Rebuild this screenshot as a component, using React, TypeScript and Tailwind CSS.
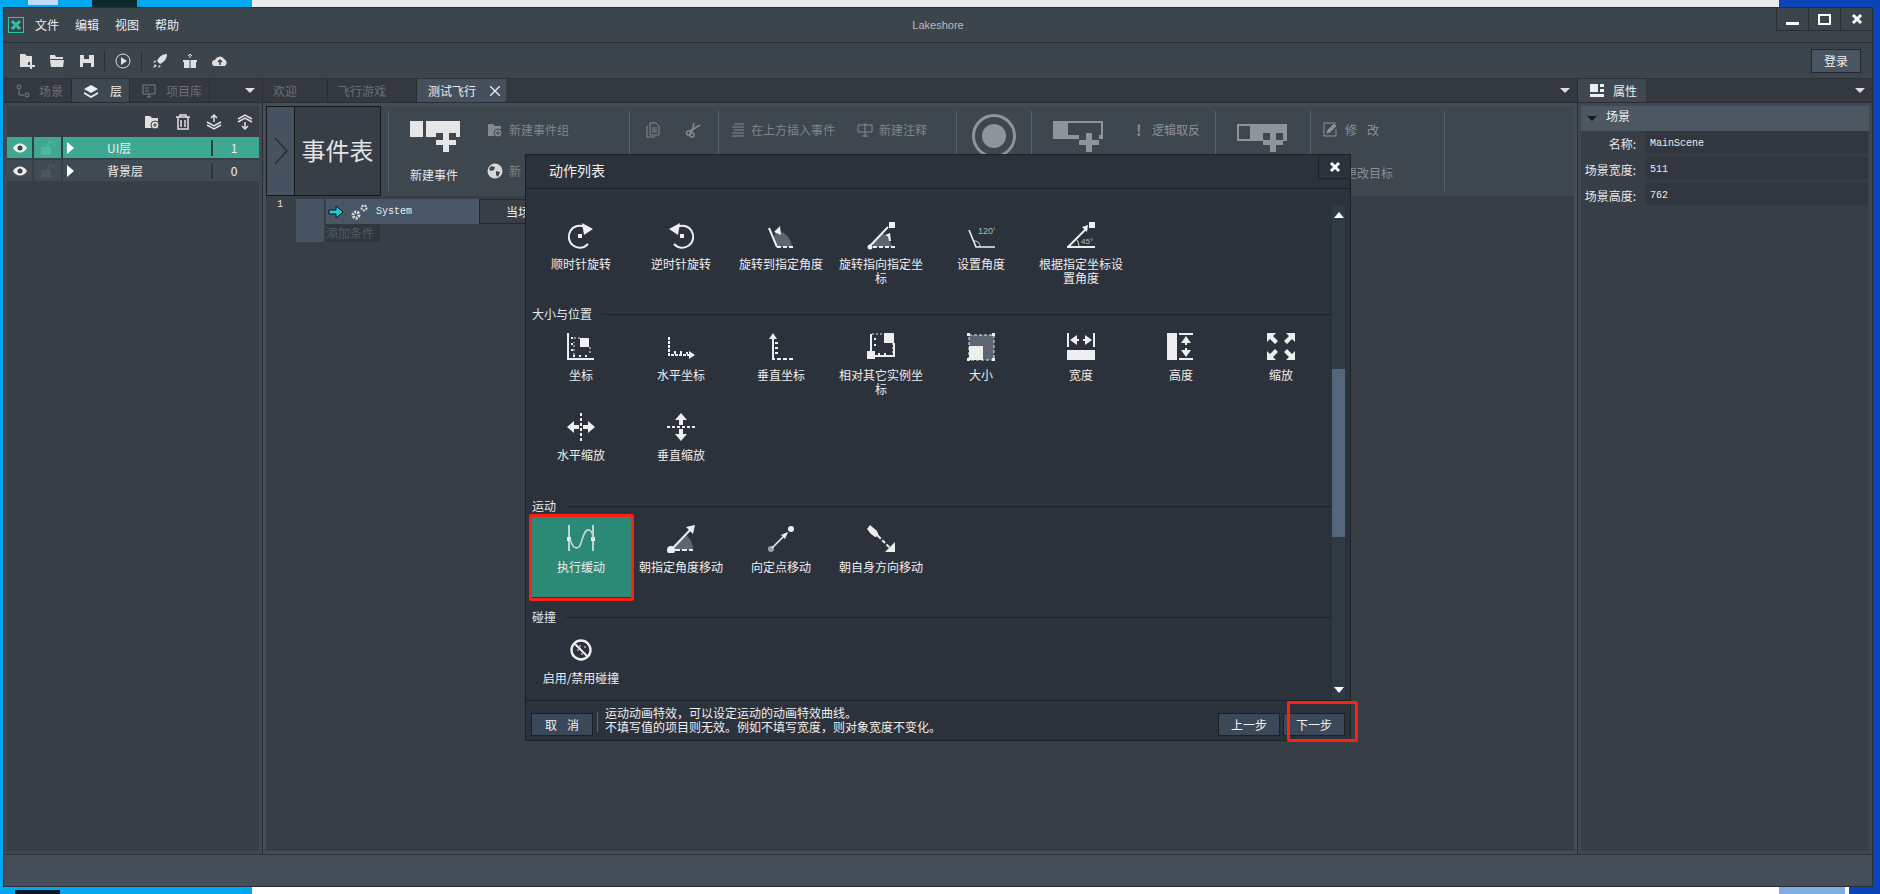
import type { ReactNode } from "react";

const F = "#eeeeee";
const G = "#5c6670";

function Svg({ children, w = 28, h = 28 }: { children: ReactNode; w?: number; h?: number }) {
  return (
    <svg width={w} height={h} viewBox={`0 0 ${w} ${h}`} fill="none" className="shrink-0">
      {children}
    </svg>
  );
}

/* ---------- action icons ---------- */
const Clockwise = () => (
  <Svg>
    <path d="M18 5A11 11 0 1 0 21 22" stroke={F} strokeWidth="2" />
    <path d="M15 1l11 6-9 6z" fill={F} />
    <rect x="11" y="12" width="4" height="4" fill={F} />
  </Svg>
);
const CounterClockwise = () => (
  <Svg>
    <g transform="translate(28 0) scale(-1 1)">
      <path d="M18 5A11 11 0 1 0 21 22" stroke={F} strokeWidth="2" />
      <path d="M15 1l11 6-9 6z" fill={F} />
    </g>
    <rect x="13" y="12" width="4" height="4" fill={F} />
  </Svg>
);
const RotateToAngle = () => (
  <Svg>
    <path d="M7 14L10 9c8 0 14 7 15 16H11z" fill={G} />
    <path d="M2 6l8 19" stroke={F} strokeWidth="2" />
    <path d="M7 10l6-6 1 9z" fill={F} />
    <path d="M10 25h16" stroke={F} strokeWidth="2" strokeDasharray="4 2" />
  </Svg>
);
const RotateToPoint = () => (
  <Svg>
    <path d="M6 21L15 11c5 3 9 8 10 14H6z" fill={G} />
    <rect x="22" y="0" width="6" height="6" fill={F} />
    <path d="M2 25L21 5" stroke={F} strokeWidth="2" />
    <circle cx="3" cy="25" r="2.5" fill={F} />
    <path d="M6 25h22" stroke={F} strokeWidth="2" strokeDasharray="4 2" />
    <path d="M18 13l5-2 1 8-2 0-1-4z" fill={F} />
  </Svg>
);
const SetAngle = () => (
  <Svg>
    <path d="M2 8l7 17h20" stroke={F} strokeWidth="1.6" />
    <path d="M7 19c4 0 6 2 6 6" stroke={F} strokeWidth="1" />
    <text x="11" y="12" fontSize="9" fill="#b5b9bd" fontFamily="Liberation Sans, sans-serif">120°</text>
  </Svg>
);
const AngleFromPoint = () => (
  <Svg>
    <rect x="22" y="0" width="6" height="6" fill={F} />
    <path d="M1 25L20 6" stroke={F} strokeWidth="2" />
    <path d="M15 5l6-2-1 7z" fill={F} />
    <path d="M0 25h28" stroke={F} strokeWidth="2" />
    <path d="M9 17c2 2 3 5 3 8" stroke={F} strokeWidth="1" />
    <text x="14" y="22" fontSize="8" fill="#b5b9bd" fontFamily="Liberation Sans, sans-serif">45°</text>
  </Svg>
);
const Ticks = ({ d }: { d: string }) => <path d={d} stroke={F} strokeWidth="2" />;
const Position = () => (
  <Svg>
    <rect x="13" y="5" width="9" height="9" fill={F} />
    <path d="M1 0v26h26" stroke={F} strokeWidth="2" />
    <Ticks d="M4 5h2M4 11h2M4 17h2M7 24v-2M13 24v-2M19 24v-2" />
    <path d="M7 5h6M23 14v8M7 22V9" stroke={F} strokeWidth="1" strokeDasharray="2 2" />
  </Svg>
);
const PositionX = () => (
  <Svg>
    <path d="M2 4v18h20" stroke={F} strokeWidth="2" strokeDasharray="3 1" />
    <path d="M22 18l6 4-6 4z" fill={F} />
    <Ticks d="M8 21v-3M14 21v-3M20 21v-2" />
  </Svg>
);
const PositionY = () => (
  <Svg>
    <path d="M6 6v20h20" stroke={F} strokeWidth="2" strokeDasharray="4 2" />
    <path d="M2 6l4-6 4 6z" fill={F} />
    <Ticks d="M8 10h3M8 15h3M8 20h3" />
    <path d="M6 5v21" stroke={F} strokeWidth="2" />
  </Svg>
);
const PositionRel = () => (
  <Svg>
    <rect x="17" y="0" width="10" height="10" fill={F} />
    <rect x="0" y="18" width="8" height="8" fill={F} />
    <path d="M4 1v20M8 23h19V10" stroke={F} strokeWidth="2" />
    <path d="M5 1h12M26 10v12" stroke={F} strokeWidth="1" strokeDasharray="2 2" />
    <Ticks d="M7 6h2M7 12h2M12 22v-2M18 22v-2" />
  </Svg>
);
const Size = () => (
  <Svg>
    <rect x="2" y="2" width="25" height="25" fill={G} />
    <rect x="2" y="13" width="14" height="14" fill={F} />
    <rect x="2" y="2" width="25" height="25" stroke={F} strokeWidth="1" strokeDasharray="3 2" />
    <path d="M0 0h3v3H0zM25 0h3v3h-3zM0 25h3v3H0zM25 25h3v3h-3z" fill={F} />
  </Svg>
);
const WidthIcon = () => (
  <Svg>
    <path d="M1 0v14M27 0v14" stroke={F} strokeWidth="2" />
    <path d="M3 7l7-5v4h2v2h-2v4zM25 7l-7-5v4h-2v2h2v4z" fill={F} />
    <rect x="0" y="17" width="28" height="10" fill={F} />
  </Svg>
);
const HeightIcon = () => (
  <Svg>
    <rect x="0" y="0" width="10" height="27" fill={F} />
    <path d="M12 1h14M12 26h14" stroke={F} strokeWidth="2" />
    <path d="M19 3l5 7h-4v2h-2v-2h-4zM19 24l5-7h-4v-2h-2v2h-4z" fill={F} />
  </Svg>
);
const Scale = () => (
  <Svg>
    <path d="M0 0h9l-3 3 5 5-3 3-5-5-3 3zM28 0h-9l3 3-5 5 3 3 5-5 3 3zM0 27h9l-3-3 5-5-3-3-5 5-3-3zM28 27h-9l3-3-5-5 3-3 5 5 3-3z" fill={F} />
  </Svg>
);
const ScaleX = () => (
  <Svg>
    <path d="M14 0v28" stroke={F} strokeWidth="2" strokeDasharray="3 2" />
    <path d="M0 14l7-6v4h5v4H7v4zM28 14l-7-6v4h-5v4h5v4z" fill={F} />
  </Svg>
);
const ScaleY = () => (
  <Svg>
    <path d="M0 14h28" stroke={F} strokeWidth="2" strokeDasharray="3 2" />
    <path d="M14 0l-6 7h4v5h4V7h4zM14 28l-6-7h4v-5h4v5h4z" fill={F} />
  </Svg>
);
const Tween = () => (
  <Svg>
    <path d="M2 0v26M26 0v26" stroke={F} strokeWidth="1.5" />
    <rect x="0" y="12" width="4" height="4" fill={F} />
    <rect x="24" y="12" width="4" height="4" fill={F} />
    <path d="M3 14c3 11 9 11 11 4s4-14 8-13 4 9 4 9" stroke="#c9d5d1" strokeWidth="1.6" />
  </Svg>
);
const MoveAngle = () => (
  <Svg>
    <path d="M8 21L19 10c5 4 7 9 7 15H8z" fill={G} />
    <circle cx="4" cy="25" r="4" fill={F} />
    <path d="M4 25L24 4" stroke={F} strokeWidth="2" />
    <path d="M19 2l9-2-2 9z" fill={F} />
    <path d="M8 25h18" stroke={F} strokeWidth="2" strokeDasharray="5 2" />
  </Svg>
);
const MoveToPoint = () => (
  <Svg>
    <circle cx="4" cy="24" r="3" fill="#9aa0a6" />
    <circle cx="24" cy="4" r="3" fill={F} />
    <path d="M5 23L20 8" stroke={F} strokeWidth="1.6" />
    <path d="M14 10l7-3-3 7z" fill={F} />
  </Svg>
);
const MoveForward = () => (
  <Svg>
    <path d="M0 4l3-4 7 6 2 5-4 1-4-3z" fill={F} />
    <path d="M11 11l13 13" stroke={F} strokeWidth="2" strokeDasharray="4 2" />
    <path d="M18 27h10V17z" fill={F} />
  </Svg>
);
const Collision = () => (
  <Svg w={24} h={24}>
    <circle cx="12" cy="12" r="9.5" stroke={F} strokeWidth="2.4" />
    <path d="M6 6l12 12" stroke={F} strokeWidth="2" />
    <path d="M8 12h2M15 9h2M11 7v2M13 15v2" stroke="#a9aeb3" strokeWidth="1.5" />
  </Svg>
);

/* ---------- dialog data ---------- */
const rotate = [
  { icon: <Clockwise />, label: "顺时针旋转" },
  { icon: <CounterClockwise />, label: "逆时针旋转" },
  { icon: <RotateToAngle />, label: "旋转到指定角度" },
  { icon: <RotateToPoint />, label: "旋转指向指定坐标" },
  { icon: <SetAngle />, label: "设置角度" },
  { icon: <AngleFromPoint />, label: "根据指定坐标设置角度" },
];
const sizePos = [
  { icon: <Position />, label: "坐标" },
  { icon: <PositionX />, label: "水平坐标" },
  { icon: <PositionY />, label: "垂直坐标" },
  { icon: <PositionRel />, label: "相对其它实例坐标" },
  { icon: <Size />, label: "大小" },
  { icon: <WidthIcon />, label: "宽度" },
  { icon: <HeightIcon />, label: "高度" },
  { icon: <Scale />, label: "缩放" },
  { icon: <ScaleX />, label: "水平缩放" },
  { icon: <ScaleY />, label: "垂直缩放" },
];
const motion = [
  { icon: <Tween />, label: "执行缓动", selected: true },
  { icon: <MoveAngle />, label: "朝指定角度移动" },
  { icon: <MoveToPoint />, label: "向定点移动" },
  { icon: <MoveForward />, label: "朝自身方向移动" },
];

function Action({ icon, label, selected }: { icon: ReactNode; label: string; selected?: boolean }) {
  return (
    <div className={`relative w-[100px] h-[80px] flex flex-col items-center pt-[8px] ${selected ? "bg-[#2a8a76]" : ""}`}>
      <div className="h-[28px] flex items-center">{icon}</div>
      <div className="mt-[7px] px-[6px] text-center text-[12px] leading-[14px] text-[#eeeeee]">{label}</div>
      {selected && (
        <div className="absolute -left-[2px] -top-[3px] -right-[3px] -bottom-[4px] border-[3px] border-[#ff2015] rounded-[2px]" />
      )}
    </div>
  );
}

function Section({ title, spacing, children }: { title: string; spacing: string; children: ReactNode }) {
  return (
    <div className={spacing}>
      <div className="flex items-center gap-[10px] h-[14px] mb-[4px]">
        <span className="ml-[6px] text-[12px] leading-[14px] text-[#e8e8e8]">{title}</span>
        <div className="flex-1 h-px bg-[#1e2328]" />
      </div>
      <div className="grid grid-cols-[repeat(8,100px)] pl-[5px]">{children}</div>
    </div>
  );
}

function DialogButton({ children, className }: { children: ReactNode; className: string }) {
  return (
    <div className={`h-[23px] w-[62px] flex items-center justify-center bg-[#3b4857] border border-[#1c2126] text-[12px] text-[#f2f2f2] ${className}`}>
      {children}
    </div>
  );
}

function ActionDialog() {
  return (
    <div className="absolute left-[521px] top-[146px] w-[826px] h-[587px] flex flex-col bg-[#2b323b] border border-[#1c2126]">
      <div className="relative h-[34px] shrink-0 border-b border-[#1c2126] flex items-center pl-[23px] pb-[2px] text-[14px] text-[#eeeeee]">
        动作列表
        <div className="absolute right-0 top-0 w-[32px] h-[24px] border-l border-b border-[#1c2126] flex items-center justify-center">
          <svg width="12" height="12" viewBox="0 0 12 12">
            <path d="M2 2l8 8M10 2l-8 8" stroke="#fff" strokeWidth="3" />
          </svg>
        </div>
      </div>
      <div className="relative flex-1 flex overflow-hidden">
        <div className="w-[806px] shrink-0 pt-[25px]">
          <div className="grid grid-cols-[repeat(8,100px)] pl-[5px]">
            {rotate.map((a) => <Action key={a.label} {...a} />)}
          </div>
          <Section title="大小与位置" spacing="mt-[13px]">
            {sizePos.map((a) => <Action key={a.label} {...a} />)}
          </Section>
          <Section title="运动" spacing="mt-[14px]">
            {motion.map((a) => <Action key={a.label} {...a} />)}
          </Section>
          <Section title="碰撞" spacing="mt-[13px]">
            <Action icon={<Collision />} label="启用/禁用碰撞" />
          </Section>
        </div>
        <div className="relative mt-[16px] w-[13px] bg-[#2e3b45] flex flex-col justify-between items-center py-[7px]">
          <div className="w-0 h-0 border-x-[5px] border-x-transparent border-b-[6px] border-b-white" />
          <div className="absolute left-0 top-[164px] w-full h-[168px] bg-[#52687a]" />
          <div className="w-0 h-0 border-x-[5px] border-x-transparent border-t-[6px] border-t-white" />
        </div>
      </div>
      <div className="h-[40px] shrink-0 border-t border-[#1c2126] flex items-end pb-[4px] pl-[5px]">
        <DialogButton className="tracking-[10px] pl-[10px]">取消</DialogButton>
        <div className="ml-[4px] mb-[4px] w-px h-[20px] bg-[#5a6269]" />
        <div className="ml-[7px] mb-[2px] text-[12px] leading-[14px] text-[#eeeeee]">
          <div>运动动画特效，可以设定运动的动画特效曲线。</div>
          <div>不填写值的项目则无效。例如不填写宽度，则对象宽度不变化。</div>
        </div>
        <DialogButton className="ml-auto">上一步</DialogButton>
        <DialogButton className="ml-[3px] mr-[5px]">下一步</DialogButton>
      </div>
      <div className="absolute left-[761px] top-[546px] w-[71px] h-[41px] border-[3px] border-[#ff2015] rounded-[2px]" />
    </div>
  );
}

/* ---------- ribbon ---------- */
const Sep = () => <div className="w-px h-[80px] self-center bg-[#56636f] shrink-0" />;

function BigPlus({ hollow, gray, left }: { hollow?: boolean; gray?: boolean; left?: boolean }) {
  const c = gray ? "#8e9499" : "#e6e6e6";
  return (
    <svg width="50" height="31" viewBox="0 0 50 31" className="shrink-0">
      {left ? (
        <>
          <rect x="0" y="3" width="50" height="17" fill={c} />
          <rect x="2" y="5" width="11" height="13" fill="#3e464e" />
        </>
      ) : hollow ? (
        <>
          <rect x="0" y="0" width="50" height="18" fill={c} />
          <rect x="15" y="2" width="33" height="12" fill="#3e464e" />
        </>
      ) : (
        <>
          <rect x="0" y="0" width="13" height="16" fill={c} />
          <rect x="16" y="0" width="34" height="16" fill={c} />
        </>
      )}
      <rect x="26" y="12" width="20" height="19" fill="#3e464e" />
      <path d="M33 12h6v7h7v5h-7v7h-6v-7h-7v-5h7z" fill={c} />
    </svg>
  );
}

function SmallItem({ icon, text }: { icon: ReactNode; text: string }) {
  return (
    <div className="flex items-center h-[16px] whitespace-nowrap text-[12px] text-[#7f858b]">
      {icon}
      <span className="ml-[6px]">{text}</span>
    </div>
  );
}

const FolderAdd = ({ c = "#858a90" }: { c?: string }) => (
  <svg width="16" height="16" viewBox="0 0 16 16" className="shrink-0">
    <path d="M1 2h5l2 2h6v10H1z" fill={c} />
    <circle cx="11" cy="11" r="4" fill={c} stroke="#3e464e" />
    <path d="M9 11h4M11 9v4" stroke="#3e464e" />
  </svg>
);
const Globe = () => (
  <svg width="16" height="16" viewBox="0 0 16 16" className="shrink-0">
    <circle cx="8" cy="8" r="7.5" fill="#d8d8d8" />
    <path d="M4 3l4 1-1 3-3 1-2-2zM9 8l4 1-2 5-2-2z" fill="#3e464e" />
  </svg>
);

function Ribbon() {
  return (
    <div className="flex h-[90px] bg-[#3e464e]">
      <div className="w-[115px] shrink-0 flex border border-[#16191c]">
        <div className="w-[28px] flex items-center justify-center bg-[#46525f] border-r border-[#16191c]">
          <svg width="16" height="28" viewBox="0 0 16 28"><path d="M2 1l12 13L2 27" fill="none" stroke="#2a2f35" strokeWidth="1.6" /></svg>
        </div>
        <div className="flex-1 flex items-center justify-center pb-[3px] bg-[#383e46] text-[24px] text-[#e4e4e4]">事件表</div>
      </div>
      <div className="w-[7px] shrink-0" />
      <Sep />
      <div className="w-[240px] shrink-0 flex pl-[21px]">
        <div className="w-[50px] pt-[15px] flex flex-col items-start">
          <BigPlus />
          <div className="mt-[16px] text-[12px] leading-[14px] text-[#e8e8e8] whitespace-nowrap">新建事件</div>
        </div>
        <div className="ml-[27px] pt-[16px] flex flex-col gap-[25px]">
          <SmallItem icon={<FolderAdd />} text="新建事件组" />
          <SmallItem icon={<Globe />} text="新" />
        </div>
      </div>
      <Sep />
      <div className="w-[88px] shrink-0 flex pt-[16px] pl-[15px] gap-[24px]">
        <svg width="16" height="16" viewBox="0 0 16 16" fill="none" stroke="#858a90"><path d="M5 1h6l3 3v9H5zM2 4v11h8M7 6h5M7 8h5M7 10h5" /></svg>
        <svg width="16" height="16" viewBox="0 0 16 16" fill="none" stroke="#858a90" strokeWidth="1.5"><path d="M15 3L5 9M9 1l-2 9" /><circle cx="3.500" cy="11" r="2" /><circle cx="7" cy="13" r="2" /></svg>
      </div>
      <Sep />
      <div className="w-[237px] shrink-0 flex pt-[16px] pl-[10px]">
        <SmallItem
          icon={<svg width="16" height="16" viewBox="0 0 16 16" stroke="#858a90"><path d="M5 2h10M3 5h12M5 8h10M3 11h12M3 14h12" /></svg>}
          text="在上方插入事件"
        />
        <div className="w-[22px]" />
        <SmallItem
          icon={<svg width="16" height="16" viewBox="0 0 16 16" fill="none" stroke="#858a90"><path d="M1 3h14v7H1zM8 1v14M5 14h6" /></svg>}
          text="新建注释"
        />
      </div>
      <Sep />
      <div className="w-[74px] shrink-0 pl-[15px] pt-[8px]">
        <svg width="44" height="44" viewBox="0 0 44 44">
          <circle cx="22" cy="22" r="20.500" fill="none" stroke="#8e9499" strokeWidth="3" />
          <circle cx="22" cy="22" r="12" fill="#8e9499" />
        </svg>
      </div>
      <Sep />
      <div className="w-[183px] shrink-0 flex pl-[21px] pt-[15px]">
        <BigPlus hollow gray />
        <div className="mt-[1px] flex items-center h-[16px] ml-[33px] text-[12px] text-[#8b9096] whitespace-nowrap">
          <span className="text-[15px] font-bold w-[10px]">!</span>
          <span className="ml-[6px]">逻辑取反</span>
        </div>
      </div>
      <Sep />
      <div className="w-[94px] shrink-0 pl-[21px] pt-[15px]">
        <BigPlus left gray />
      </div>
      <Sep />
      <div className="w-[133px] shrink-0 pl-[11px] pt-[16px] flex flex-col gap-[27px] text-[12px] leading-[16px] text-[#8b9096] whitespace-nowrap">
        <div className="flex items-center">
          <svg width="16" height="16" viewBox="0 0 16 16" fill="none" stroke="#8b9096"><path d="M14 1H2v13h12V7" /><path d="M5 11l1-3 6-6 2 2-6 6z" fill="#8b9096" /></svg>
          <span className="ml-[7px] tracking-[10px]">修改</span>
        </div>
        <div className="pl-[23px]">更改目标</div>
      </div>
      <Sep />
    </div>
  );
}

/* ---------- panels ---------- */
const Eye = () => (
  <svg width="14" height="10" viewBox="0 0 14 10">
    <path d="M0 5c3-6 11-6 14 0-3 6-11 6-14 0z" fill="#eee" />
    <circle cx="7" cy="5" r="2.500" fill="#3b4249" />
  </svg>
);
const Lock = ({ c }: { c: string }) => (
  <svg width="16" height="14" viewBox="0 0 16 14" fill="none">
    <path d="M8 6V4a3 3 0 0 1 6 0v1" stroke={c} strokeWidth="1.500" />
    <rect x="1" y="6" width="10" height="8" fill={c} />
  </svg>
);

function LayerRow({ name, count, active }: { name: string; count: string; active?: boolean }) {
  const bg = active ? "bg-[#3fa892]" : "bg-[#3f4a52]";
  return (
    <div className="flex h-[21px] gap-[2px] text-[12px] text-[#eeeeee]">
      <div className={`w-[25px] flex items-center justify-center ${bg}`}><Eye /></div>
      <div className={`w-[27px] flex items-center justify-center ${bg}`}><Lock c={active ? "#4eb59f" : "#4c565e"} /></div>
      <div className={`flex-1 flex items-center ${bg}`}>
        <div className="ml-[4px] w-0 h-0 border-y-[6px] border-y-transparent border-l-[7px] border-l-white" />
        <span className="ml-[33px] w-[104px]">{name}</span>
        <div className={`w-[2px] h-[16px] ${active ? "bg-[#24403f]" : "bg-[#2f363c]"}`} />
        <span className="flex-1 text-center pr-[4px]">{count}</span>
      </div>
    </div>
  );
}

function PropRow({ label, value }: { label: string; value: string }) {
  return (
    <div className="flex items-center h-[22px]">
      <div className="w-[55px] pt-[3px] text-right text-[12px] text-[#e8e8e8] whitespace-nowrap">{label}</div>
      <div className="flex-1 ml-[10px] mr-[1px] h-full flex items-center pl-[4px] pt-[3px] bg-[#32363e] font-['Liberation_Mono',monospace] text-[10px] text-[#eeeeee]">
        {value}
      </div>
    </div>
  );
}

function Caret() {
  return <div className="w-0 h-0 border-x-[5px] border-x-transparent border-t-[5px] border-t-[#dddddd]" />;
}

const tbIcon = "#e0e0e0";

function Toolbar() {
  return (
    <div className="h-[36px] shrink-0 border-b border-[#2d3238] bg-[#3c444c] flex items-center">
      <div className="ml-[15px] flex items-center gap-[14px]">
        <svg width="16" height="16" viewBox="0 0 16 16"><path d="M1 1h5l2 2h5v6H9v5H1z" fill={tbIcon} /><path d="M12 9v7M9 13h7" stroke={tbIcon} strokeWidth="2" /></svg>
        <svg width="16" height="16" viewBox="0 0 16 16"><path d="M1 2h5l1 2h7v2H1zM1 7h14l-1 7H2z" fill={tbIcon} /></svg>
        <svg width="16" height="16" viewBox="0 0 16 16"><path d="M1 2h14v12H1z" fill={tbIcon} /><path d="M5 2h5v4H5z" fill="#3c444c" /><path d="M4 10h8v4H4z" fill="#3c444c" /></svg>
      </div>
      <div className="ml-[9px] w-px h-[20px] bg-[#2a2f34]" />
      <svg className="ml-[10px]" width="16" height="16" viewBox="0 0 16 16" fill="none"><circle cx="8" cy="8" r="7" stroke={tbIcon} /><path d="M6 4l6 4-6 4z" fill={tbIcon} /></svg>
      <div className="ml-[10px] w-px h-[20px] bg-[#2a2f34]" />
      <div className="ml-[10px] flex items-center gap-[14px]">
        <svg width="16" height="16" viewBox="0 0 16 16"><path d="M15 1c-5 0-8 3-10 7l3 3c4-2 7-5 7-10zM4 9l-3 1 2-3zM7 12l-1 3 3-2zM3 11l2 2-4 2z" fill={tbIcon} /></svg>
        <svg width="16" height="16" viewBox="0 0 16 16"><path d="M1 7h14v2l-1 0v6H2V9H1z" fill={tbIcon} /><path d="M8 1v4M6 3l2-2 2 2" stroke={tbIcon} /><path d="M8 7v8" stroke="#3c444c" /></svg>
        <svg width="16" height="16" viewBox="0 0 16 12"><path d="M3 11a3 3 0 0 1 0-6 5 5 0 0 1 9-1 4 4 0 0 1 1 7z" fill={tbIcon} /><path d="M8 10V5M6 7l2-2 2 2" stroke="#3c444c" strokeWidth="1.500" fill="none" /></svg>
      </div>
      <div className="ml-auto mr-[11px] w-[50px] h-[24px] flex items-center justify-center bg-[#4a5563] border border-[#23282d] text-[12px] text-[#eeeeee]">登录</div>
    </div>
  );
}

function TabStrip({ children }: { children: ReactNode }) {
  return (
    <div className="h-[24px] shrink-0 flex items-stretch bg-[#33393f] border-b border-[#2a2e33] text-[12px]">
      {children}
      <div className="ml-auto mr-[7px] self-center"><Caret /></div>
    </div>
  );
}

export default function App() {
  return (
    <div className="relative w-[1880px] h-[894px] overflow-hidden bg-white font-['Noto_Sans_CJK_SC','Liberation_Sans',sans-serif]">
      {/* desktop behind the window */}
      <div className="absolute left-0 top-0 w-[252px] h-full bg-[#00a8f0]" />
      <div className="absolute left-[252px] top-0 w-[1527px] h-[7px] bg-[#e9ebee]" />
      <div className="absolute left-[1779px] top-0 w-[101px] h-full bg-[#0a44b8]" />
      <div className="absolute left-[1779px] top-[887px] w-[66px] h-[7px] bg-[#7fb0e0]" />
      <div className="absolute left-[1845px] top-[887px] w-[4px] h-[7px] bg-white" />
      <div className="absolute left-[28px] top-0 w-[30px] h-[5px] bg-[#bcdcf5]" />
      <div className="absolute left-[92px] top-0 w-[45px] h-[7px] bg-[#0b2a2e]" />
      <div className="absolute left-[15px] top-[890px] w-[45px] h-[4px] bg-[#06182e]" />

      {/* app window */}
      <div className="absolute left-[3px] top-[7px] w-[1870px] h-[880px] flex flex-col bg-[#3c444c] border border-[#2a2f34]">
        <div className="relative h-[35px] shrink-0 border-b border-[#2d3238] flex items-center text-[12px] text-[#eeeeee]">
          <svg className="ml-[4px]" width="16" height="16" viewBox="0 0 16 16" fill="none">
            <rect x="0.500" y="0.500" width="15" height="15" stroke="#2bc4a8" />
            <path d="M4 4l8 8M12 4l-8 8" stroke="#2bc4a8" strokeWidth="3" />
          </svg>
          <div className="ml-[11px] flex gap-[16px]">
            <span>文件</span><span>编辑</span><span>视图</span><span>帮助</span>
          </div>
          <div className="absolute left-0 right-0 text-center font-['Liberation_Sans',sans-serif] text-[11px] text-[#b8bcc0]">Lakeshore</div>
          <div className="ml-auto self-start flex h-[23px] border-l border-b border-[#2a2f34]">
            <div className="w-[32px] flex items-center justify-center border-r border-[#2a2f34]"><div className="mt-[8px] w-[13px] h-[3px] bg-white" /></div>
            <div className="w-[32px] flex items-center justify-center border-r border-[#2a2f34]"><div className="w-[13px] h-[11px] border-[2px] border-white" /></div>
            <div className="w-[31px] flex items-center justify-center">
              <svg width="12" height="12" viewBox="0 0 12 12"><path d="M2 2l8 8M10 2l-8 8" stroke="#fff" strokeWidth="3" /></svg>
            </div>
          </div>
        </div>
        <Toolbar />

        <div className="flex-1 flex min-h-0">
          {/* left panel */}
          <div className="w-[259px] shrink-0 flex flex-col border-r border-[#2a2e33]">
            <TabStrip>
              <div className="w-[68px] flex items-center pl-[12px] gap-[9px] text-[#6a7075] border-r border-[#2a2e33]">
                <svg width="14" height="14" viewBox="0 0 14 14" fill="none" stroke="#7a8085"><circle cx="3" cy="3" r="2" /><circle cx="11" cy="11" r="2" /><path d="M3 6v5h5" /></svg>
                场景
              </div>
              <div className="w-[57px] flex items-center pl-[12px] gap-[12px] bg-[#3f4851] text-[#eeeeee]">
                <svg width="14" height="14" viewBox="0 0 14 14" fill="#eee"><path d="M7 1l7 4-7 4-7-4zM0 8l7 4 7-4v2l-7 4-7-4z" /></svg>
                层
              </div>
              <div className="w-[81px] flex items-center pl-[12px] gap-[10px] text-[#6a7075] border-x border-[#2a2e33]">
                <svg width="14" height="14" viewBox="0 0 14 14" fill="none" stroke="#7a8085"><path d="M1 1h12v9H1zM5 13h4M7 10v3M3 4h4M3 7h4" /></svg>
                项目库
              </div>
            </TabStrip>
            <div className="flex-1 bg-[#383e46] border-[3px] border-[#404850]">
              <div className="h-[31px] flex items-center justify-end pr-[6px] gap-[15px]">
                <FolderAdd c="#e0e0e0" />
                <svg width="16" height="16" viewBox="0 0 16 16" fill="none" stroke="#e0e0e0" strokeWidth="1.500"><path d="M1 3h14M5 3V1h6v2M3 3v12h10V3M6 6v7M10 6v7" /></svg>
                <svg width="16" height="16" viewBox="0 0 16 16" fill="none" stroke="#e0e0e0" strokeWidth="1.500"><path d="M8 8V1M5 4l3-3 3 3M1 8l7 4 7-4M1 11l7 4 7-4" /></svg>
                <svg width="16" height="16" viewBox="0 0 16 16" fill="none" stroke="#e0e0e0" strokeWidth="1.500"><path d="M1 5l7-4 7 4M1 8l7-4 7 4M8 8v7M5 12l3 3 3-3" /></svg>
              </div>
              <div className="flex flex-col gap-[2px]">
                <LayerRow name="UI层" count="1" active />
                <LayerRow name="背景层" count="0" />
              </div>
            </div>
          </div>

          {/* centre */}
          <div className="w-[1315px] shrink-0 flex flex-col border-r border-[#2a2e33]">
            <TabStrip>
              <div className="w-[65px] flex items-center pl-[10px] text-[#6a7075] border-r border-[#2a2e33]">欢迎</div>
              <div className="w-[89px] flex items-center pl-[10px] text-[#6a7075] border-r border-[#2a2e33]">飞行游戏</div>
              <div className="w-[89px] flex items-center pl-[11px] bg-[#45505c] text-[#eeeeee]">
                测试飞行
                <svg className="ml-[14px]" width="10" height="10" viewBox="0 0 10 10"><path d="M0 0l10 10M10 0L0 10" stroke="#eee" strokeWidth="1.300" /></svg>
              </div>
            </TabStrip>
            <div className="flex-1 bg-[#383e46] border-[3px] border-[#454e58]">
              <Ribbon />
              <div className="relative flex pt-[3px] text-[10px]">
                <div className="w-[30px] pl-[11px] leading-[12px] font-['Liberation_Mono',monospace] text-[#e0e0e0]">1</div>
                <div className="w-[28px] h-[43px] bg-[#465361]" />
                <div className="ml-[2px]">
                  <div className="flex">
                    <div className="w-[153px] h-[25px] flex items-center pl-[2px] bg-[#485665]">
                      <svg width="16" height="14" viewBox="0 0 16 14"><path d="M1 5h7V1l7 6-7 6V9H1z" fill="#27c6d6" stroke="#111" /></svg>
                      <svg className="ml-[6px]" width="18" height="18" viewBox="0 0 18 18" fill="none" stroke="#dddddd"><circle cx="6" cy="12" r="3" strokeWidth="3" strokeDasharray="2 1" /><circle cx="14" cy="5" r="2.500" strokeWidth="2" strokeDasharray="2 1" /></svg>
                      <span className="ml-[8px] font-['Liberation_Mono',monospace] text-[#eeeeee]">System</span>
                    </div>
                    <div className="w-[60px] h-[25px] flex items-center pl-[26px] border border-[#23282d] text-[12px] text-[#eeeeee] whitespace-nowrap">当场</div>
                  </div>
                  <div className="w-[54px] h-[18px] flex items-center bg-[#30363d] text-[12px] text-[#555b62] whitespace-nowrap">添加条件</div>
                </div>
              </div>
            </div>
          </div>

          {/* right panel */}
          <div className="flex-1 flex flex-col">
            <TabStrip>
              <div className="w-[68px] flex items-center pl-[12px] gap-[9px] bg-[#3f4851] text-[#eeeeee]">
                <svg width="14" height="14" viewBox="0 0 14 14" fill="#eee"><path d="M0 0h8v8H0zM10 0h4v3h-4zM10 5h4v3h-4zM0 10h14v3H0z" /></svg>
                属性
              </div>
            </TabStrip>
            <div className="flex-1 bg-[#383e46] border-[3px] border-[#404850]">
              <div className="h-[25px] flex bg-[#4c5761] text-[12px] text-[#eeeeee]">
                <div className="ml-[6px] mt-[10px] w-0 h-0 border-x-[5px] border-x-transparent border-t-[5px] border-t-[#15181b]" />
                <span className="ml-[9px] mt-[1px]">场景</span>
              </div>
              <div className="flex flex-col gap-[4px]">
                <PropRow label="名称:" value="MainScene" />
                <PropRow label="场景宽度:" value="511" />
                <PropRow label="场景高度:" value="762" />
              </div>
            </div>
          </div>
        </div>

        <div className="h-[32px] shrink-0 border-t border-[#2d3238] bg-[#454e58]" />
        <ActionDialog />
      </div>
    </div>
  );
}
